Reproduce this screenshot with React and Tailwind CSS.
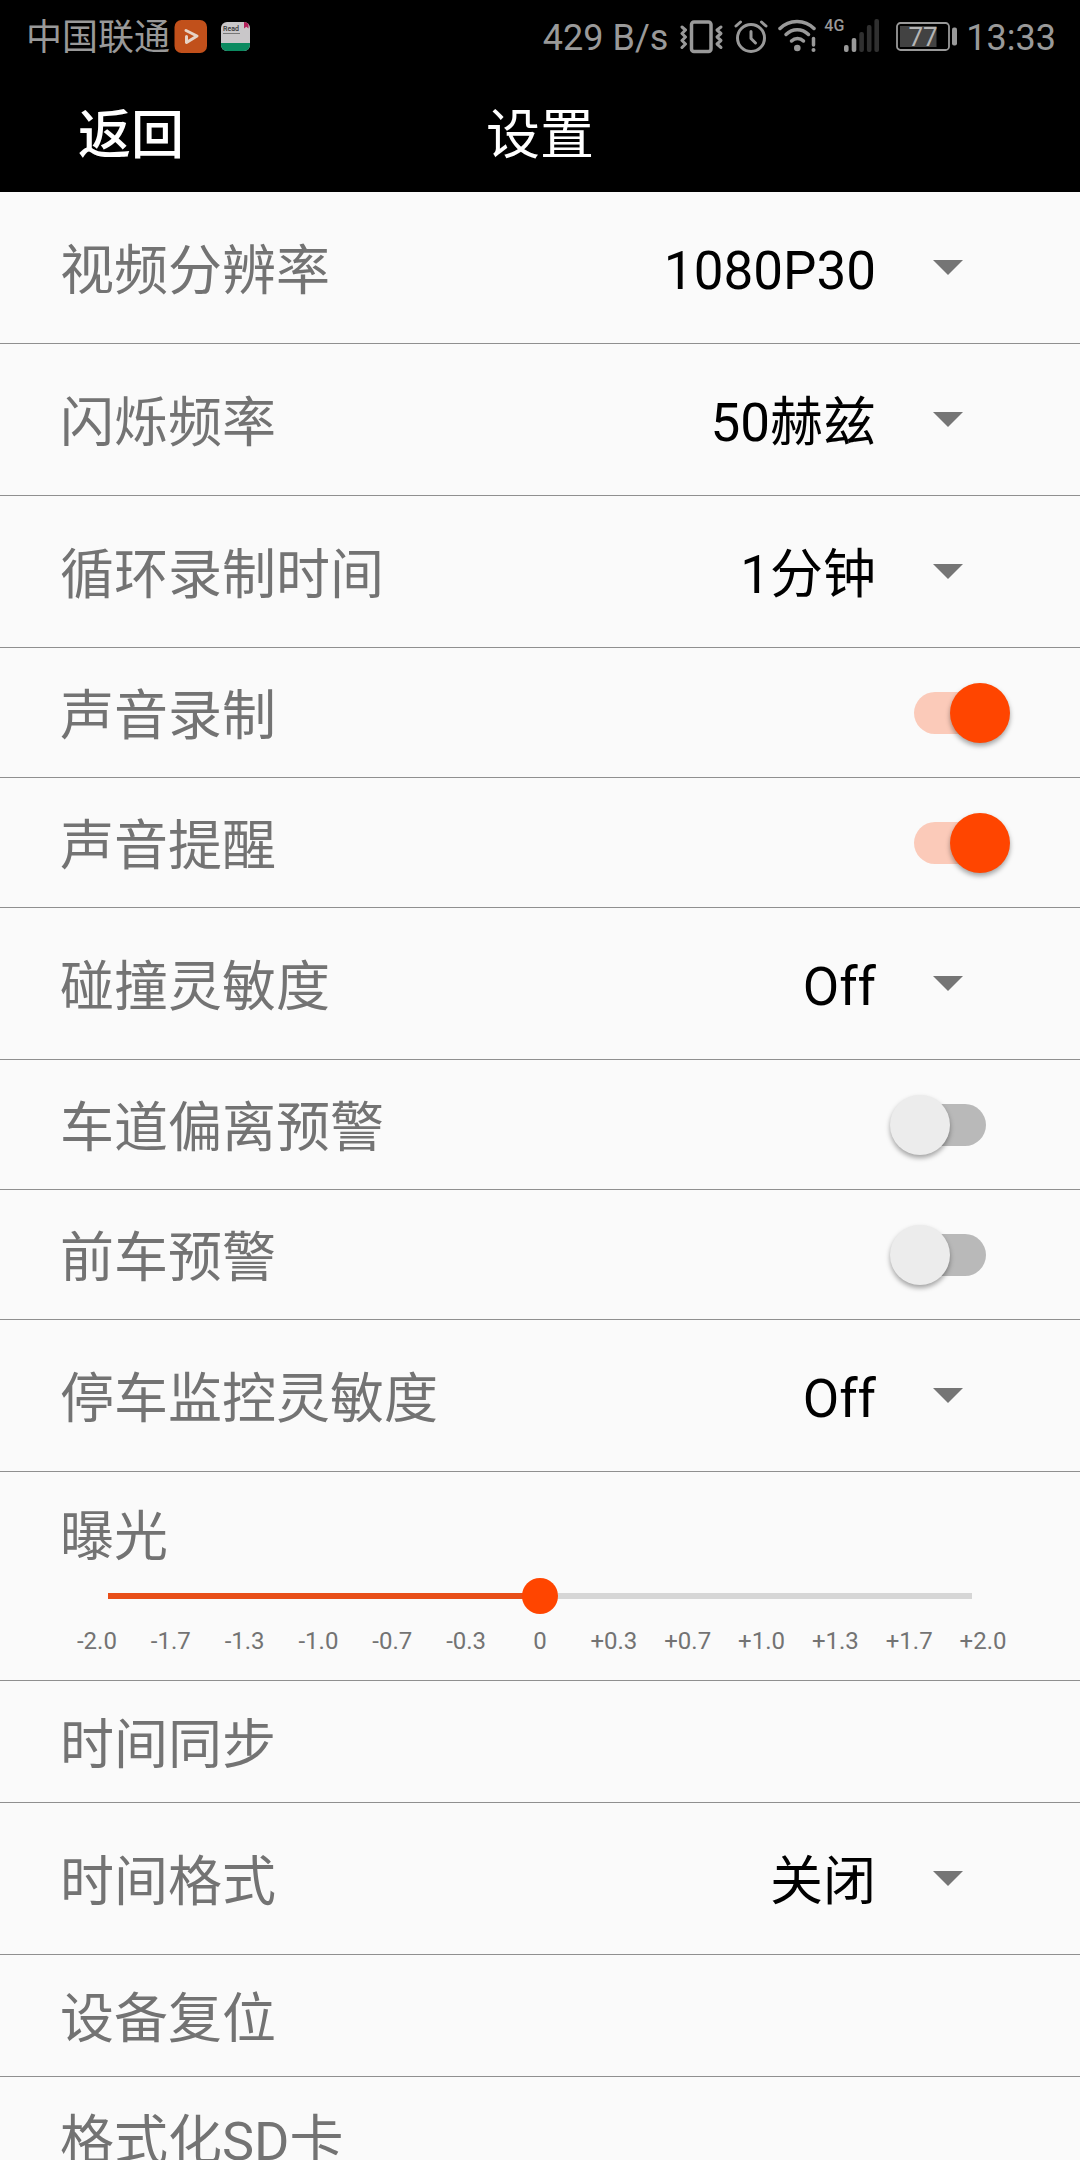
import React, { useState } from "react";

// Redovi podešavanja, redom kako stoje na ekranu
const ROWS = [
  {
    id: "resolution",
    type: "select",
    label: "视频分辨率",
    value: "1080P30",
    options: ["1080P30", "720P30"],
  },
  {
    id: "flicker",
    type: "select",
    label: "闪烁频率",
    value: "50赫兹",
    options: ["50赫兹", "60赫兹"],
  },
  {
    id: "loop",
    type: "select",
    label: "循环录制时间",
    value: "1分钟",
    options: ["1分钟", "3分钟", "5分钟"],
  },
  { id: "audio", type: "switch", label: "声音录制", value: true },
  { id: "beep", type: "switch", label: "声音提醒", value: true },
  {
    id: "collision",
    type: "select",
    label: "碰撞灵敏度",
    value: "Off",
    options: ["Off", "Low", "High"],
  },
  { id: "lane", type: "switch", label: "车道偏离预警", value: false },
  { id: "front", type: "switch", label: "前车预警", value: false },
  {
    id: "parking",
    type: "select",
    label: "停车监控灵敏度",
    value: "Off",
    options: ["Off", "Low", "High"],
  },
  { id: "exposure", type: "slider", label: "曝光", value: 6 },
  { id: "sync", type: "action", label: "时间同步" },
  {
    id: "timeformat",
    type: "select",
    label: "时间格式",
    value: "关闭",
    options: ["关闭", "12", "24"],
  },
  { id: "reset", type: "action", label: "设备复位" },
  { id: "format", type: "action", label: "格式化SD卡" },
];

const EV_STEPS = [
  "-2.0",
  "-1.7",
  "-1.3",
  "-1.0",
  "-0.7",
  "-0.3",
  "0",
  "+0.3",
  "+0.7",
  "+1.0",
  "+1.3",
  "+1.7",
  "+2.0",
];

function VideoAppIcon() {
  return (
    <svg className="h-9 w-[34px]" viewBox="0 0 34 36" aria-hidden="true">
      <rect x="0.5" y="2" width="32.5" height="33" rx="7" fill="#c1501b" />
      <path
        d="M12 12.5 L23 18 L12.5 24.5 V18.5"
        fill="none"
        stroke="#e6d3c6"
        strokeWidth="3"
        strokeLinecap="round"
        strokeLinejoin="round"
      />
    </svg>
  );
}

function ReadAppIcon() {
  return (
    <svg className="h-9 w-8" viewBox="0 0 32 36" aria-hidden="true">
      <clipPath id="readClip">
        <rect x="1" y="4" width="29" height="29" rx="6" />
      </clipPath>
      <g clipPath="url(#readClip)">
        <rect x="1" y="4" width="29" height="29" fill="#c9c7c9" />
        <rect x="1" y="25" width="29" height="8" fill="#0b8a60" />
        <path d="M24 4 h4.5 v6.5 l-2.2 -1.8 l-2.3 1.8 z" fill="#b3205a" />
        <rect x="3" y="15" width="17" height="1" fill="#777" />
        <text x="3" y="13" fontSize="7" fontWeight="500" fill="#333">
          Read
        </text>
      </g>
    </svg>
  );
}

function VibrateIcon() {
  return (
    <svg
      className="h-9 w-11"
      viewBox="0 0 44 36"
      fill="none"
      stroke="currentColor"
      strokeLinecap="round"
      strokeLinejoin="round"
      aria-hidden="true"
    >
      <rect x="11.5" y="4" width="19.5" height="29.5" rx="2.5" strokeWidth="3.5" />
      <path
        d="M2 8 L5.5 11 L2 14.5 L5.5 18 L2 21.5 L5.5 25 L2 28.5"
        transform="translate(0 1)"
        strokeWidth="3"
      />
      <path
        d="M41 8 L37 11 L41 14.5 L37 18 L41 21.5 L37 25 L41 28.5"
        transform="translate(0 1)"
        strokeWidth="3"
      />
    </svg>
  );
}

function AlarmIcon() {
  return (
    <svg
      className="h-9 w-[34px]"
      viewBox="0 0 34 36"
      fill="none"
      stroke="currentColor"
      strokeWidth="3"
      strokeLinecap="round"
      strokeLinejoin="round"
      aria-hidden="true"
    >
      <circle cx="17" cy="20" r="13.5" />
      <path d="M17 13.5 V20.5 L21.5 25" />
      <path d="M2 8 L6.5 4" />
      <path d="M32 8 L27.5 4" />
    </svg>
  );
}

function WifiIcon() {
  return (
    <svg
      className="h-9 w-10"
      viewBox="0 0 40 36"
      fill="none"
      stroke="currentColor"
      strokeWidth="3.5"
      strokeLinecap="round"
      aria-hidden="true"
    >
      <path d="M2 10.5 C11 1 27 1 36 10.5" />
      <path d="M8 16.5 C14.5 10 24 10 30.5 16.5" />
      <path d="M13.5 23 C17 19.5 22 19.5 25.5 23" />
      <circle cx="19.3" cy="30" r="3.3" fill="currentColor" stroke="none" />
      <path d="M35.5 20.5 V27" />
      <circle cx="35.5" cy="32" r="2" fill="currentColor" stroke="none" />
    </svg>
  );
}

function SignalIcon() {
  return (
    <svg className="h-9 w-9" viewBox="0 0 36 36" aria-hidden="true">
      <rect x="0" y="27" width="4.6" height="7" rx="2" fill="currentColor" />
      <rect x="7.7" y="20" width="4.6" height="14" rx="2" fill="currentColor" />
      <rect x="15.3" y="14" width="4.6" height="20" rx="2" fill="#303030" />
      <rect x="22.9" y="7" width="4.6" height="27" rx="2" fill="#303030" />
      <rect x="30.4" y="1" width="4.6" height="33" rx="2" fill="#303030" />
    </svg>
  );
}

function BatteryIcon({ level }) {
  return (
    <svg className="h-9 w-[62px]" viewBox="0 0 62 36" aria-label={`${level}%`}>
      <rect
        x="1"
        y="5"
        width="52"
        height="27"
        rx="3.5"
        fill="none"
        stroke="currentColor"
        strokeWidth="1.8"
      />
      <rect x="4" y="8" width="36.5" height="21" fill="#424242" />
      <rect x="56" y="9.5" width="5" height="18" rx="2" fill="currentColor" />
      <text x="27" y="28" textAnchor="middle" fontSize="26" fill="#b5b5b5">
        {level}
      </text>
    </svg>
  );
}

function StatusBar() {
  return (
    <div className="flex h-[72px] items-center justify-between pr-6 pl-[26px] text-4xl text-[#999]">
      <div className="flex items-center">
        <span className="mr-1 pt-1">中国联通</span>
        <VideoAppIcon />
        <span className="ml-3 flex">
          <ReadAppIcon />
        </span>
      </div>
      <div className="flex items-center">
        <span className="mr-3 pt-1">429 B/s</span>
        <VibrateIcon />
        <span className="ml-2.5 flex">
          <AlarmIcon />
        </span>
        <span className="ml-2.5 flex">
          <WifiIcon />
        </span>
        <span className="ml-1.5 h-9 text-base leading-4 font-medium">4G</span>
        <SignalIcon />
        <span className="mr-2 ml-4 flex">
          <BatteryIcon level={77} />
        </span>
        <span className="pt-1">13:33</span>
      </div>
    </div>
  );
}

function Header() {
  return (
    <header className="shrink-0 bg-black">
      <StatusBar />
      <div className="grid h-[120px] grid-cols-3 items-center px-[78px] pt-2 text-[54px] leading-[72px] text-white">
        <button type="button" className="justify-self-start text-[53px] font-medium">
          返回
        </button>
        <h1 className="text-center">设置</h1>
      </div>
    </header>
  );
}

function SelectRow({ row }) {
  const [value, setValue] = useState(row.value);
  return (
    <div className="flex h-[152px] items-center border-b border-[#8f8f8f] pr-[108px] pl-[60px]">
      <label htmlFor={row.id} className="shrink-0 pt-2">
        {row.label}
      </label>
      <div className="relative flex flex-1 items-center">
        <select
          id={row.id}
          value={value}
          onChange={(e) => setValue(e.target.value)}
          className="w-full appearance-none bg-transparent pt-1.5 pr-24 text-right text-[53px] text-black outline-none [text-align-last:right]"
        >
          {row.options.map((o) => (
            <option key={o}>{o}</option>
          ))}
        </select>
        <svg
          className="pointer-events-none absolute right-[9px] h-[15px] w-[30px]"
          viewBox="0 0 30 15"
          aria-hidden="true"
        >
          <path d="M0 0 H30 L15 15 Z" fill="#757575" />
        </svg>
      </div>
    </div>
  );
}

function SwitchRow({ row }) {
  const [on, setOn] = useState(row.value);
  return (
    <div className="flex h-[130px] items-center justify-between border-b border-[#8f8f8f] pr-[70px] pl-[60px]">
      <label htmlFor={row.id} className="pt-2">
        {row.label}
      </label>
      <input
        id={row.id}
        type="checkbox"
        role="switch"
        checked={on}
        onChange={(e) => setOn(e.target.checked)}
        className="relative h-[60px] w-[120px] appearance-none before:absolute before:inset-x-6 before:inset-y-[9px] before:rounded-full before:bg-[#b9b9b9] after:absolute after:top-0 after:left-0 after:size-[60px] after:rounded-full after:bg-[#ececec] after:shadow-[0_3px_5px_rgba(0,0,0,0.35)] checked:before:bg-[#fbcab9] checked:after:left-[60px] checked:after:bg-[#ff4500]"
      />
    </div>
  );
}

function SliderRow({ row }) {
  const [value, setValue] = useState(row.value);
  const max = EV_STEPS.length - 1;
  const pct = (value / max) * 100;
  return (
    <div className="flex h-[209px] flex-col border-b border-[#8f8f8f] px-[60px] pt-[30px]">
      <label htmlFor={row.id}>{row.label}</label>
      <div className="flex px-12 pt-1">
        <input
          id={row.id}
          type="range"
          min="0"
          max={max}
          value={value}
          onChange={(e) => setValue(Number(e.target.value))}
          style={{
            backgroundImage: `linear-gradient(to right, #e84e18 ${pct}%, #d6d6d6 ${pct}%)`,
          }}
          className="h-9 w-full appearance-none bg-[length:100%_6px] bg-center bg-no-repeat [&::-webkit-slider-thumb]:size-9 [&::-webkit-slider-thumb]:appearance-none [&::-webkit-slider-thumb]:rounded-full [&::-webkit-slider-thumb]:bg-[#ff4500]"
        />
      </div>
      <div className="grid grid-cols-13 pt-[11px] text-center text-2xl leading-8">
        {EV_STEPS.map((s) => (
          <span key={s}>{s}</span>
        ))}
      </div>
    </div>
  );
}

function ActionRow({ row }) {
  return (
    <button
      type="button"
      className="flex h-[122px] w-full items-center border-b border-[#8f8f8f] px-[60px] pt-2 text-left"
    >
      {row.label}
    </button>
  );
}

export default function App() {
  const renderRow = (row) => {
    switch (row.type) {
      case "select":
        return <SelectRow key={row.id} row={row} />;
      case "switch":
        return <SwitchRow key={row.id} row={row} />;
      case "slider":
        return <SliderRow key={row.id} row={row} />;
      default:
        return <ActionRow key={row.id} row={row} />;
    }
  };

  return (
    <div className="flex h-screen flex-col bg-[#fafafa] font-['Roboto','Noto_Sans_CJK_SC',sans-serif]">
      <Header />
      <main className="min-h-0 flex-1 overflow-y-auto text-[54px] leading-[72px] text-[#737373] [scrollbar-width:none]">
        {ROWS.map(renderRow)}
      </main>
    </div>
  );
}
